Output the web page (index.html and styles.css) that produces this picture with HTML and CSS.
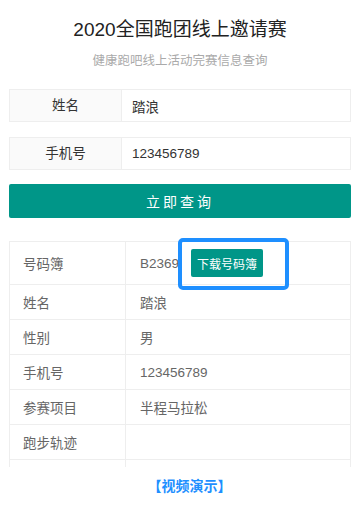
FILE: index.html
```html
<!DOCTYPE html>
<html>
<head>
    <meta charset="utf-8">
    <title>2020全国跑团线上邀请赛</title>
    <link rel="stylesheet" href="styles.css">
</head>
<body>
    <h1 class="title">2020全国跑团线上邀请赛</h1>
    <p class="subtitle">健康跑吧线上活动完赛信息查询</p>

    <div class="form">
        <div class="form-row">
            <label class="form-label" for="name">姓名</label>
            <input class="form-input" id="name" type="text" value="踏浪">
        </div>
        <div class="form-row">
            <label class="form-label" for="phone">手机号</label>
            <input class="form-input" id="phone" type="text" value="123456789">
        </div>
        <button class="btn-query">立即查询</button>
    </div>

    <div class="result">
        <div class="row row-first">
            <div class="cell-label">号码簿</div>
            <div class="cell-value">
                B2369
                <span class="btn-wrap">
                    <button class="btn-download">下载号码簿</button>
                    <span class="highlight"></span>
                </span>
            </div>
        </div>
        <div class="row">
            <div class="cell-label">姓名</div>
            <div class="cell-value">踏浪</div>
        </div>
        <div class="row">
            <div class="cell-label">性别</div>
            <div class="cell-value">男</div>
        </div>
        <div class="row">
            <div class="cell-label">手机号</div>
            <div class="cell-value">123456789</div>
        </div>
        <div class="row">
            <div class="cell-label">参赛项目</div>
            <div class="cell-value">半程马拉松</div>
        </div>
        <div class="row">
            <div class="cell-label">跑步轨迹</div>
            <div class="cell-value"></div>
        </div>
        <div class="row">
            <div class="cell-label"></div>
            <div class="cell-value"></div>
        </div>
    </div>

    <p class="video"><a href="#">【视频演示】</a></p>
</body>
</html>
```

FILE: styles.css
```css
body {
    margin: 0;
    padding: 0 9px;
    font-family: "Liberation Sans", "Noto Sans CJK SC", sans-serif;
    background-color: #fff;
    color: #333;
}

.title {
    margin: 18px 0 0;
    font-size: 19px;
    font-weight: normal;
    line-height: 24px;
    text-align: center;
    color: #222;
}

.subtitle {
    margin: 8px 0 0;
    font-size: 12.5px;
    line-height: 22px;
    text-align: center;
    color: #aaa;
}

.form {
    margin-top: 17px;
}

.form-row {
    display: flex;
    height: 33px;
    margin-bottom: 15px;
    border: 1px solid #eee;
    box-sizing: border-box;
}

.form-row + .form-row {
    margin-bottom: 14px;
}

.form-label {
    width: 111px;
    flex-shrink: 0;
    background-color: #fafafa;
    border-right: 1px solid #eee;
    font-size: 13.5px;
    line-height: 31px;
    text-align: center;
    color: #333;
}

.form-input {
    flex: 1;
    min-width: 0;
    border: none;
    padding: 0 10px;
    font-family: inherit;
    font-size: 13.5px;
    color: #333;
    background: #fff;
    outline: none;
}

.btn-query {
    display: block;
    width: 100%;
    height: 34px;
    border: none;
    border-radius: 2px;
    background-color: #009688;
    color: #fff;
    font-family: inherit;
    font-size: 14px;
    letter-spacing: 3px;
    cursor: pointer;
}

/* list is cut at the bottom, but the annotation box may stick out on top */
.result {
    margin-top: 23px;
    height: 226px;
    border: 1px solid #eee;
    border-bottom: none;
    box-sizing: border-box;
    clip-path: inset(-20px -20px 0 -20px);
}

.row {
    display: flex;
    height: 35px;
    border-bottom: 1px solid #eee;
    box-sizing: border-box;
    font-size: 13.5px;
    color: #666;
}

.row-first {
    height: 43px;
}

.cell-label {
    width: 116px;
    flex-shrink: 0;
    box-sizing: border-box;
    padding-left: 13px;
    border-right: 1px solid #eee;
    display: flex;
    align-items: center;
}

.cell-value {
    flex: 1;
    padding-left: 14px;
    display: flex;
    align-items: center;
}

.btn-wrap {
    position: relative;
    margin-left: 12px;
    display: inline-flex;
}

.btn-download {
    width: 72px;
    height: 28px;
    padding: 0;
    border: none;
    border-radius: 2px;
    background-color: #009688;
    color: #fff;
    font-family: inherit;
    font-size: 12px;
    cursor: pointer;
}

/* annotation box drawn over the download button */
.highlight {
    position: absolute;
    left: -13px;
    right: -26px;
    top: -11px;
    bottom: -13px;
    border: 4px solid #1e8fff;
    border-radius: 5px;
    pointer-events: none;
}

.video {
    margin: 9px 0 0;
    padding-left: 19px;
    line-height: 20px;
    text-align: center;
}

.video a {
    font-size: 14px;
    font-weight: bold;
    color: #1e8fff;
    text-decoration: none;
}
```
